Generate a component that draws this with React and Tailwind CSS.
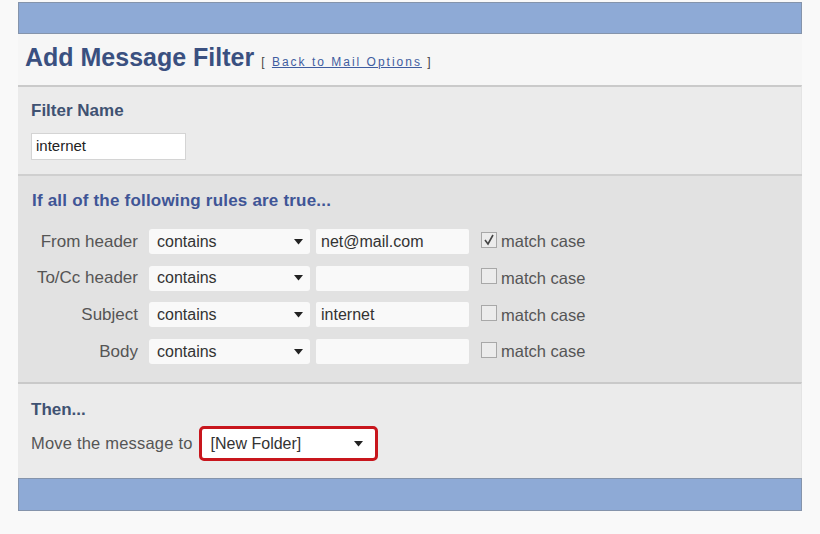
import React from "react";

const rules = [
  { label: "From header", value: "net@mail.com", checked: true },
  { label: "To/Cc header", value: "", checked: false },
  { label: "Subject", value: "internet", checked: false },
  { label: "Body", value: "", checked: false },
];

const Arrow = () => (
  <svg width="9" height="6" viewBox="0 0 9 6" className="shrink-0">
    <path d="M0 0 L9 0 L4.5 5.5 Z" fill="#222" />
  </svg>
);

const App = () => {
  return (
    <div className="min-h-[534px] bg-[#f9f9f9] pt-[2px] font-['Liberation_Sans',Arial,sans-serif]">
      <div className="ml-[18px] w-[784px]">
        <div className="h-[32px] bg-[#8eaad6] border border-[#8594ab]" />

        <div className="h-[51px] bg-[#f6f6f6] flex items-center pl-[7px] pb-[4px]">
          <h1 className="text-[25px] font-bold text-[#3a5080]">Add Message Filter</h1>
          <span className="ml-[7px] mt-[8px] text-[12px] text-[#444] tracking-[2px]">
            [ <a href="#" className="text-[#3f5da0] underline">Back to Mail Options</a> ]
          </span>
        </div>

        <div className="h-[89px] bg-[#ebebeb] border-t-2 border-[#cacaca] border-r border-r-[#e4e4e4] pl-[13px] pt-[14px]">
          <div className="text-[17px] font-bold text-[#3f5272] leading-[20px]">Filter Name</div>
          <div className="mt-[12px] w-[155px] h-[27px] bg-white border border-[#d4d4d4] flex items-center pl-[4px] text-[15px] text-[#222]">
            internet
          </div>
        </div>

        <div className="h-[208px] bg-[#e2e2e2] border-t-2 border-[#cfcfcf] pt-[15px]">
          <div className="pl-[14px] text-[17px] font-bold text-[#3f5596] leading-[20px] tracking-[0.2px]">
            If all of the following rules are true...
          </div>
          <div className="mt-[18px] flex flex-col gap-[11.7px]">
            {rules.map((r) => (
              <div key={r.label} className="flex items-center h-[25px]">
                <div className="w-[120px] text-right text-[17px] text-[#555]">{r.label}</div>
                <div className="ml-[11px] w-[161px] h-[25px] bg-[#f9f9f9] rounded-[3px] flex items-center justify-between pl-[8px] pr-[7px] text-[16px] text-[#333]">
                  <span>contains</span>
                  <Arrow />
                </div>
                <div className="ml-[6px] w-[153px] h-[25px] bg-[#f9f9f9] rounded-[2px] flex items-center pl-[5px] text-[16px] text-[#333]">
                  {r.value}
                </div>
                <div className="ml-[12px] w-[16px] h-[16px] border border-[#a8a8a8] bg-[#ececec] flex items-center justify-center -mt-[4px]">
                  {r.checked && (
                    <svg width="12" height="12" viewBox="0 0 12 12">
                      <path d="M2 6 L5 10 L10 1" stroke="#444" strokeWidth="1.6" fill="none" />
                    </svg>
                  )}
                </div>
                <span className="ml-[4px] text-[16.5px] text-[#555]">match case</span>
              </div>
            ))}
          </div>
        </div>

        <div className="h-[96px] bg-[#ebebeb] border-t-2 border-[#c9c9c9] border-r border-r-[#e4e4e4] pl-[13px] pt-[16px]">
          <div className="text-[17px] font-bold text-[#3f5272] leading-[20px]">Then...</div>
          <div className="mt-[6px] flex items-center">
            <span className="text-[16.5px] text-[#555] tracking-[0.2px]">Move the message to</span>
            <div className="ml-[6px] w-[179px] h-[35px] border-[3px] border-[#c8161d] rounded-[5px] bg-white flex items-center justify-between pl-[9px] pr-[12px] text-[16px] text-[#333]">
              <span>[New Folder]</span>
              <Arrow />
            </div>
          </div>
        </div>

        <div className="h-[33px] bg-[#8eaad6] border border-[#8594ab]" />
      </div>
    </div>
  );
};

export default App;
